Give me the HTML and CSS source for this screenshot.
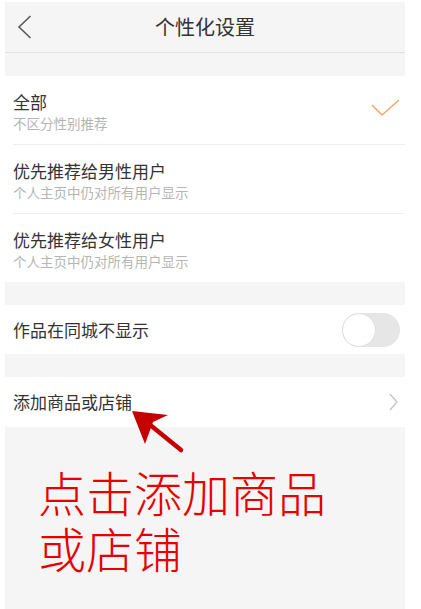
FILE: index.html
```html
<!DOCTYPE html>
<html lang="zh-CN">
<head>
<meta charset="utf-8">
<title>个性化设置</title>
<link rel="stylesheet" href="styles.css">
</head>
<body>
<div class="page">
  <header class="header">
    <div class="back">
      <svg width="16" height="24" viewBox="0 0 16 24"><polyline points="13.5,1 2,12 13.5,23" fill="none" stroke="#555" stroke-width="1.5"/></svg>
    </div>
    <h1 class="title">个性化设置</h1>
    <div></div>
  </header>

  <section class="group first">
    <div class="row tall">
      <div class="texts">
        <div class="main">全部</div>
        <div class="sub">不区分性别推荐</div>
      </div>
      <svg class="check" width="29" height="18" viewBox="0 0 29 18"><polyline points="1,6 11,16 28,1" fill="none" stroke="#f6a56a" stroke-width="1.5"/></svg>
    </div>
    <div class="divider"></div>
    <div class="row tall">
      <div class="texts">
        <div class="main">优先推荐给男性用户</div>
        <div class="sub">个人主页中仍对所有用户显示</div>
      </div>
    </div>
    <div class="divider"></div>
    <div class="row tall">
      <div class="texts">
        <div class="main">优先推荐给女性用户</div>
        <div class="sub">个人主页中仍对所有用户显示</div>
      </div>
    </div>
  </section>

  <section class="group">
    <div class="row short">
      <div class="main">作品在同城不显示</div>
      <div class="switch"><span class="knob"></span></div>
    </div>
  </section>

  <section class="group">
    <div class="row short link">
      <div class="main">添加商品或店铺</div>
      <svg width="9" height="18" viewBox="0 0 9 18"><polyline points="1,1 8,9 1,17" fill="none" stroke="#c4c4c4" stroke-width="1.3"/></svg>
    </div>
  </section>

  <div class="note">
    <div class="note-line">点击添加商品</div>
    <div class="note-line">或店铺</div>
  </div>

  <svg class="arrow" width="70" height="60" viewBox="0 0 70 60">
    <polygon points="12,11 48,15 33,22 25,44" fill="#c40000"/>
    <line x1="29" y1="24" x2="61" y2="50" stroke="#c40000" stroke-width="4.5" stroke-linecap="round"/>
  </svg>
</div>
</body>
</html>
```

FILE: styles.css
```css
html, body {
  margin: 0;
  padding: 0;
  background: #ffffff;
}

body {
  font-family: "Noto Sans CJK SC", "Noto Sans", sans-serif;
  color: #333333;
}

.page {
  position: relative;
  width: 400px;
  height: 607px;
  margin: 2px 0 0 5px;
  background: #f5f5f5;
  overflow: hidden;
}

.header {
  display: grid;
  grid-template-columns: 40px 1fr 40px;
  align-items: center;
  height: 50px;
  border-bottom: 1px solid #e2e2e2;
}

.back {
  display: flex;
  align-items: center;
  padding-left: 12px;
  height: 50px;
}

.back svg {
  display: block;
}

.title {
  margin: 0;
  text-align: center;
  font-size: 20px;
  font-weight: normal;
  color: #333333;
  line-height: 50px;
}

.group {
  background: #ffffff;
  margin-top: 23px;
}

.row {
  display: flex;
  align-items: center;
  justify-content: space-between;
  padding: 0 5px 0 8px;
}

.row.tall {
  height: 68px;
}

.row.short {
  height: 49px;
}

.row.link {
  height: 50px;
  padding-right: 7px;
}

.row svg {
  display: block;
}

.texts {
  display: flex;
  flex-direction: column;
  align-self: flex-start;
  padding-top: 15px;
}

.main {
  font-size: 17px;
  line-height: 22px;
  color: #333333;
}

.sub {
  font-size: 13.5px;
  line-height: 20px;
  color: #b5b5b5;
}

.check {
  margin-top: -4px;
}

.divider {
  height: 1px;
  margin-left: 8px;
  background: #eeeeee;
}

.switch {
  position: relative;
  width: 58px;
  height: 34px;
  border-radius: 17px;
  background: #e6e6e6;
}

.knob {
  position: absolute;
  left: 0;
  top: 0;
  width: 32px;
  height: 32px;
  border-radius: 50%;
  background: #ffffff;
  border: 1px solid #dddddd;
}

.note {
  margin: 36px 0 0 33px;
  color: #e60000;
}

.note-line {
  font-size: 48px;
  font-weight: 300;
  line-height: 56px;
  height: 56px;
  overflow: visible;
}

.arrow {
  position: absolute;
  left: 115px;
  top: 398px;
}
```
